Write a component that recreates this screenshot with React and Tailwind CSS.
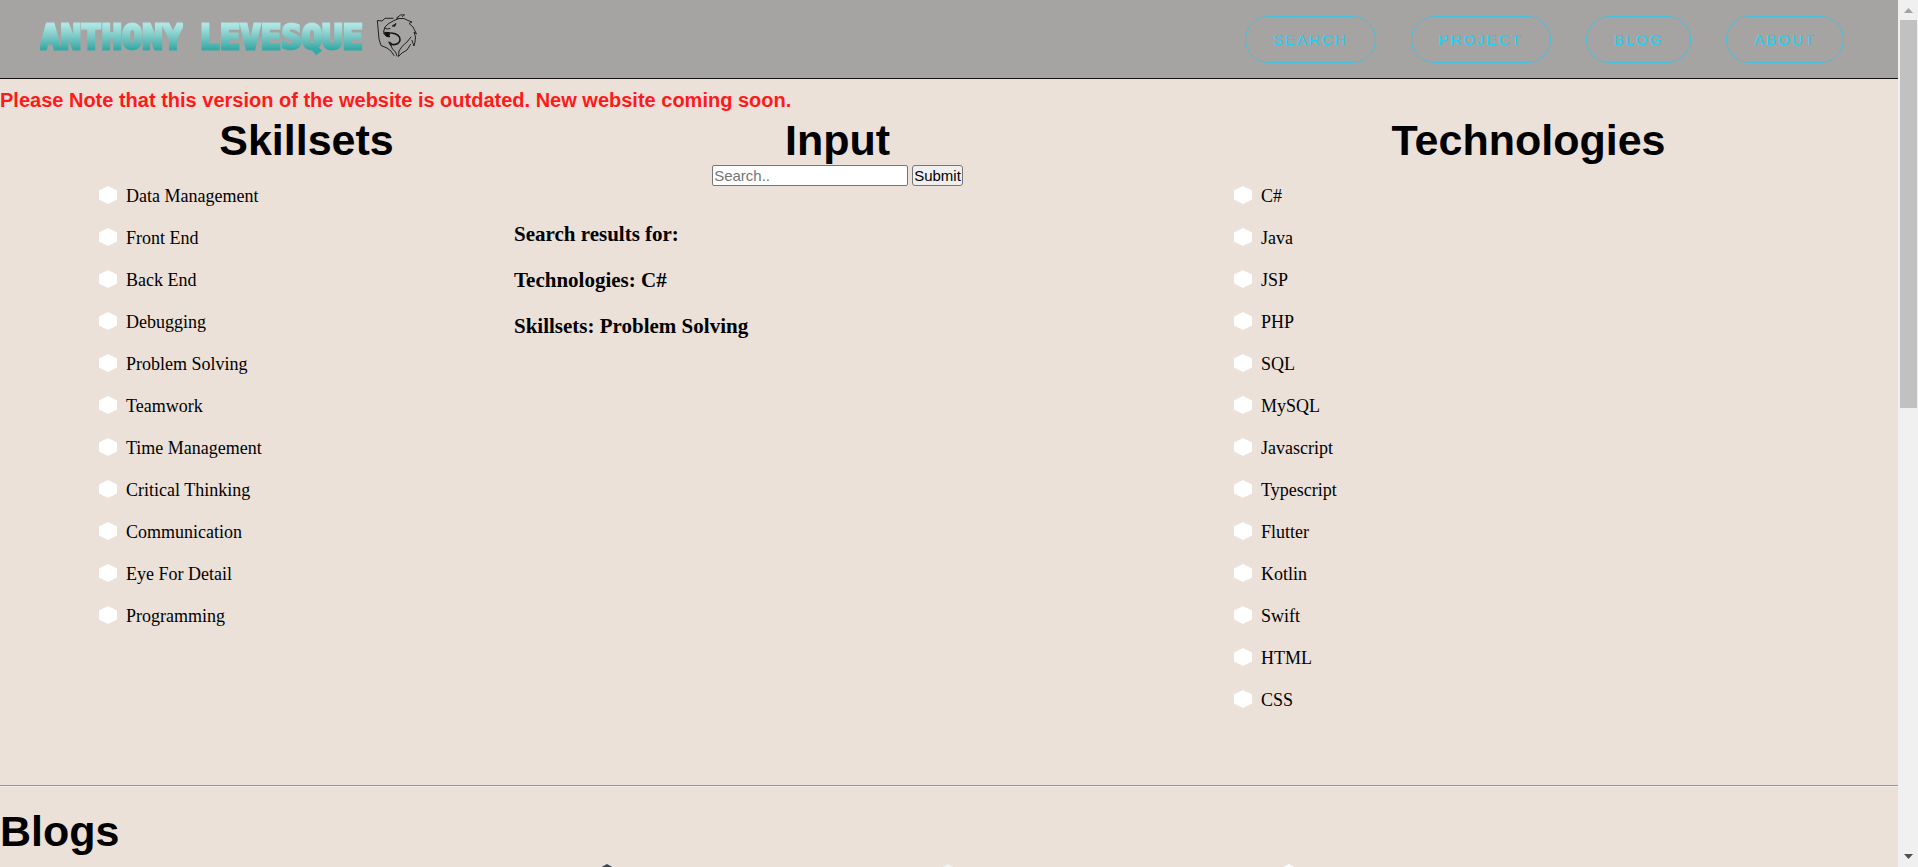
import { useState } from "react";

const skillsets = [
  "Data Management", "Front End", "Back End", "Debugging", "Problem Solving", "Teamwork",
  "Time Management", "Critical Thinking", "Communication", "Eye For Detail", "Programming",
];

const technologies = [
  "C#", "Java", "JSP", "PHP", "SQL", "MySQL", "Javascript", "Typescript", "Flutter",
  "Kotlin", "Swift", "HTML", "CSS",
];

const blogTiles = ["bg-[#3f4547]", "bg-[#f2f2f2]", "bg-white"];

function LionMark() {
  return (
    <svg viewBox="6 4 44 46" className="h-[46px] w-11" fill="none" stroke="#222" strokeWidth="1" strokeLinejoin="round" strokeLinecap="round" aria-hidden="true">
      <path d="M24 10.300H16L13 13 8.300 12.500 9 20 10 31 12 37.500 18 40 22 43 25 47.500" />
      <path d="M14.800 23 16 19 19 16 25 12.500 30 10.500 27.500 10 31.500 7 35.500 6.800 33.500 8.500" />
      <path d="M30 10.500 35 10.500 39 12.500 43 14 40 15.500 44 19 47.500 26 45 24 46.500 29 46 34 45 38 43 32.500" />
      <path d="M42 29 38 34 33 38.500 30 43 29.500 48.500 33 45 38 42 41.500 36.500" />
      <path d="M16 20 18 21 21 20.500" />
      <path d="M23.500 17.800 27 15.500 26 18Z" fill="#1c1c1c" />
      <path d="M15 25 17 24.300 21.500 24.800 20 27 20.500 29 17.500 28.300Z" fill="#111" stroke="#111" />
      <path d="M22.500 25C28 25.500 31.500 28.500 31 32 30.500 36 26 37.500 21.500 36" strokeWidth="1.6" stroke="#151515" />
      <path d="M20 34 23 35.500 22 37.500Z" fill="#151515" />
      <path d="M22 37.500 23.500 41 26.500 44 28 48M14.800 23 15 25" />
    </svg>
  );
}

function Option({ name, label, checked, onSelect }) {
  return (
    <li>
      <label className="flex h-[42px] items-center gap-[9px] text-lg leading-6 text-black">
        <input
          type="radio"
          name={name}
          checked={checked}
          onChange={onSelect}
          className="mb-[2px] size-[18px] appearance-none bg-white [clip-path:polygon(50%_0,100%_25%,100%_75%,50%_100%,0_75%,0_25%)]"
        />
        {label}
      </label>
    </li>
  );
}

function OptionList({ name, items, value, onChange }) {
  return (
    <ul className="mt-[10px]">
      {items.map((item) => (
        <Option key={item} name={name} label={item} checked={value === item} onSelect={() => onChange(item)} />
      ))}
    </ul>
  );
}

function Heading({ children, className = "" }) {
  return <h1 className={`pb-[2px] font-["Liberation_Sans",Arial,sans-serif] text-[43px] leading-[46px] font-bold text-black ${className}`}>{children}</h1>;
}

function Scrollbar() {
  return (
    <div className="flex w-5 shrink-0 flex-col items-center justify-between bg-[#f0f0f0]" aria-hidden="true">
      <svg className="h-5 w-5" viewBox="0 0 20 20"><path d="M6 13 10.500 8 15 13Z" fill="#a3a3a3" /></svg>
      <div className="mb-auto h-[44.7%] w-[17px] bg-[#c1c1c1]" />
      <svg className="h-5 w-5" viewBox="0 0 20 20"><path d="M6 7 10.500 12 15 7Z" fill="#505050" /></svg>
    </div>
  );
}

export default function App() {
  const [skill, setSkill] = useState("Problem Solving");
  const [tech, setTech] = useState("C#");
  const [query, setQuery] = useState("");

  return (
    <div className="flex h-screen overflow-hidden bg-[#ebe1d9] font-['Liberation_Serif','Times_New_Roman',serif]">
      <div className="min-w-0 flex-1 overflow-hidden">
        <header className="flex h-[79px] items-center justify-between border-b border-[#111] bg-[#a5a4a2] pr-[54px] pl-10">
          <a href="#home" className="flex h-full items-center gap-3 pb-2">
            <span className="flex gap-4 pt-1 font-['DejaVu_Sans_Mono',monospace] text-[34px] leading-10 font-bold whitespace-nowrap">
              {["ANTHONY", "LEVESQUE"].map((word) => (
                <span key={word} className="bg-linear-to-b from-[#aee6e4] from-20% to-[#35aaa6] to-80% bg-clip-text text-transparent [-webkit-text-stroke:3px_transparent]">
                  {word}
                </span>
              ))}
            </span>
            <LionMark />
          </a>
          <nav className="flex gap-[35px]">
            {["SEARCH", "PROJECT", "BLOG", "ABOUT"].map((item) => (
              <a
                key={item}
                href={`#${item.toLowerCase()}`}
                className="rounded-full border border-[#45c1dd] px-[27px] py-[11px] font-['Liberation_Sans',Arial,sans-serif] text-[15px] leading-[23px] tracking-[2px] text-[#1fd0f5]"
              >
                {item}
              </a>
            ))}
          </nav>
        </header>

        <p className="pt-[9px] font-['Liberation_Sans',Arial,sans-serif] text-xl leading-6 font-bold text-[#ff1a1a]">
          Please Note that this version of the website is outdated. New website coming soon.
        </p>

        <main>
          <section className="grid grid-cols-[415fr_647fr_737fr] pt-[5px] pl-[99px]">
            <div>
              <Heading className="text-center">Skillsets</Heading>
              <OptionList name="skillset" items={skillsets} value={skill} onChange={setSkill} />
            </div>
            <div>
              <Heading className="text-center">Input</Heading>
              <form className="flex justify-center gap-1 font-['Liberation_Sans',Arial,sans-serif] text-[15px] leading-[17px]" onSubmit={(e) => e.preventDefault()}>
                <input
                  type="text"
                  aria-label="Search"
                  placeholder="Search.."
                  value={query}
                  onChange={(e) => setQuery(e.target.value)}
                  className="h-[21px] w-[196px] rounded-[2px] border border-[#767676] bg-white px-px text-black placeholder:text-[#757575]"
                />
                <button type="submit" className="h-[21px] rounded-[3px] border border-[#767676] bg-[#efefef] px-px text-black">Submit</button>
              </form>
              <div className="mt-9 space-y-[22px] text-[21px] leading-6 font-bold text-black">
                <h3>Search results for:{query && ` ${query}`}</h3>
                <h3>Technologies: {tech}</h3>
                <h3>Skillsets: {skill}</h3>
              </div>
            </div>
            <div className="pr-[75px] pl-[73px]">
              <Heading className="text-center">Technologies</Heading>
              <OptionList name="technology" items={technologies} value={tech} onChange={setTech} />
            </div>
          </section>

          <hr className="mt-16 h-[2px] border-t border-b border-t-[#969696] border-b-[#eeeeee]" />

          <section className="pt-[21px]">
            <Heading>Blogs</Heading>
            <div className="mt-2 flex gap-[21px] pl-[447px]">
              {blogTiles.map((color) => (
                <article key={color} className={`h-[360px] w-80 shrink-0 [clip-path:polygon(50%_0,100%_25%,100%_75%,50%_100%,0_75%,0_25%)] ${color}`} />
              ))}
            </div>
          </section>
        </main>
      </div>
      <Scrollbar />
    </div>
  );
}
